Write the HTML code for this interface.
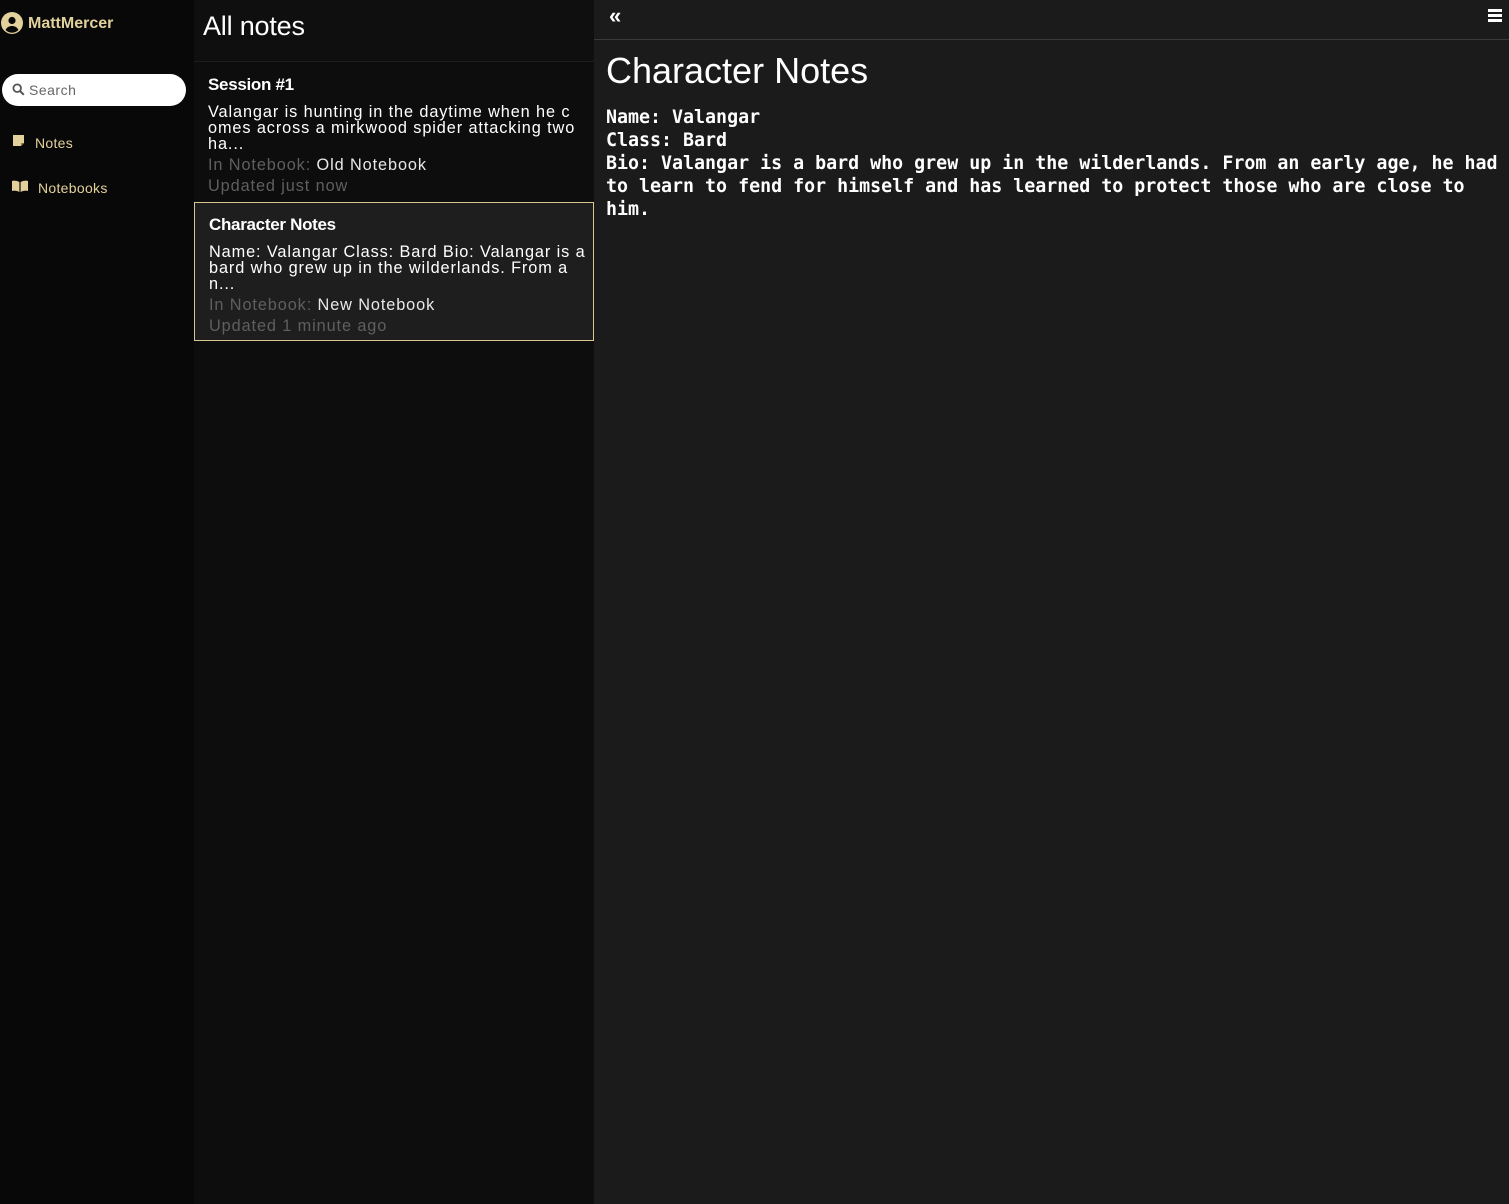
<!DOCTYPE html>
<html><head><meta charset="utf-8"><style>
*{box-sizing:border-box;margin:0;padding:0}
body{width:1509px;height:1204px;overflow:hidden;background:#1b1b1b;font-family:"Liberation Sans",sans-serif;position:relative}
.side{position:absolute;left:0;top:0;width:194px;height:1204px;background:#080808}
.list{position:absolute;left:194px;top:0;width:400px;height:1204px;background:#0d0d0d}
.listhead{height:62px;border-bottom:1px solid #1e1e1e;background:#0f0f0f}
.gold{color:#e3d19c}
.ed{position:absolute;left:594px;top:0;right:0;height:1204px;background:#1b1b1b}
.topbar{height:40px;border-bottom:1px solid #3a3a3a}
.mono{font-family:"DejaVu Sans Mono",monospace;font-weight:bold;font-size:18.3px;line-height:23px;color:#fff;position:absolute;left:12px;top:106px;right:0;white-space:nowrap}
.card{position:absolute;left:0;width:400px;color:#fff;padding:0 14px}
.t{font-weight:bold;font-size:17px;letter-spacing:-0.3px}
.p{font-size:16.3px;line-height:16px;margin-top:9px;letter-spacing:0.9px;white-space:nowrap}
.m{font-size:16.3px;color:#5f5f5f;line-height:21px;letter-spacing:0.9px}
.m span{color:#e8e8e8}
</style></head><body>
<div class="side">
 <svg style="position:absolute;left:1px;top:12px" width="22" height="22" viewBox="0 0 22 22"><circle cx="11" cy="11" r="11" fill="#e3d19c"/><circle cx="11" cy="8.5" r="3.6" fill="#080808"/><path d="M4.5 18c1.5-3 4-4 6.5-4s5 1 6.5 4a9 9 0 0 1-13 0z" fill="#080808"/></svg>
 <div class="gold" style="position:absolute;left:28px;top:15px;font-size:16px;font-weight:bold">MattMercer</div>
 <div style="position:absolute;left:2px;top:74px;width:184px;height:32px;background:#fff;border-radius:16px">
  <svg style="position:absolute;left:10px;top:9px" width="13" height="13" viewBox="0 0 13 13"><circle cx="5.2" cy="5.2" r="3.8" fill="none" stroke="#555" stroke-width="1.8"/><path d="M8 8l3.8 3.8" stroke="#555" stroke-width="2"/></svg>
  <span style="position:absolute;left:27px;top:8px;font-size:14px;color:#666;letter-spacing:0.5px">Search</span>
 </div>
 <svg style="position:absolute;left:13px;top:135px" width="12" height="12" viewBox="0 0 12 12"><path d="M0 0h11v8l-3 3H0z" fill="#e3d19c"/><path d="M8 11V8h3" fill="#8a7a50"/></svg>
 <div class="gold" style="position:absolute;left:35px;top:135px;font-size:14px;letter-spacing:0.3px">Notes</div>
 <svg style="position:absolute;left:12px;top:180px" width="16" height="12" viewBox="0 0 16 12"><path d="M0 1q4-1 7.4 1v10Q4 10 0 11zM16 1q-4-1-7.4 1v10q3.4-2 7.4-1z" fill="#e3d19c"/></svg>
 <div class="gold" style="position:absolute;left:38px;top:180px;font-size:14px;letter-spacing:0.3px">Notebooks</div>
</div>
<div class="list">
 <div class="listhead"><div style="position:absolute;left:9px;top:11px;font-size:27px;color:#fff;letter-spacing:-0.2px">All notes</div></div>
 <div class="card" style="top:75px">
  <div class="t">Session #1</div>
  <div class="p">Valangar is hunting in the daytime when he c<br>omes across a mirkwood spider attacking two<br>ha...</div>
  <div class="m" style="margin-top:3px">In Notebook: <span>Old Notebook</span></div>
  <div class="m">Updated just now</div>
 </div>
 <div class="card" style="top:202px;height:139px;background:#1e1e1e;border:1px solid #d9c78f;padding-top:12px">
  <div class="t">Character Notes</div>
  <div class="p">Name: Valangar Class: Bard Bio: Valangar is a<br>bard who grew up in the wilderlands. From a<br>n...</div>
  <div class="m" style="margin-top:3px">In Notebook: <span>New Notebook</span></div>
  <div class="m">Updated 1 minute ago</div>
 </div>
</div>
<div class="ed">
 <div class="topbar">
  <div style="position:absolute;left:15px;top:3px;color:#fff;font-size:22px;font-weight:bold">«</div>
  <div style="position:absolute;left:894px;top:9px;width:14px">
   <div style="height:2.5px;background:#fff;margin-bottom:2.5px"></div><div style="height:2.5px;background:#fff;margin-bottom:2.5px"></div><div style="height:2.5px;background:#fff"></div>
  </div>
 </div>
 <div style="position:absolute;left:12px;top:50px;font-size:36px;color:#fff">Character Notes</div>
 <div class="mono">Name: Valangar<br>Class: Bard<br>Bio: Valangar is a bard who grew up in the wilderlands. From an early age, he had<br>to learn to fend for himself and has learned to protect those who are close to<br>him.</div>
</div>
</body></html>
